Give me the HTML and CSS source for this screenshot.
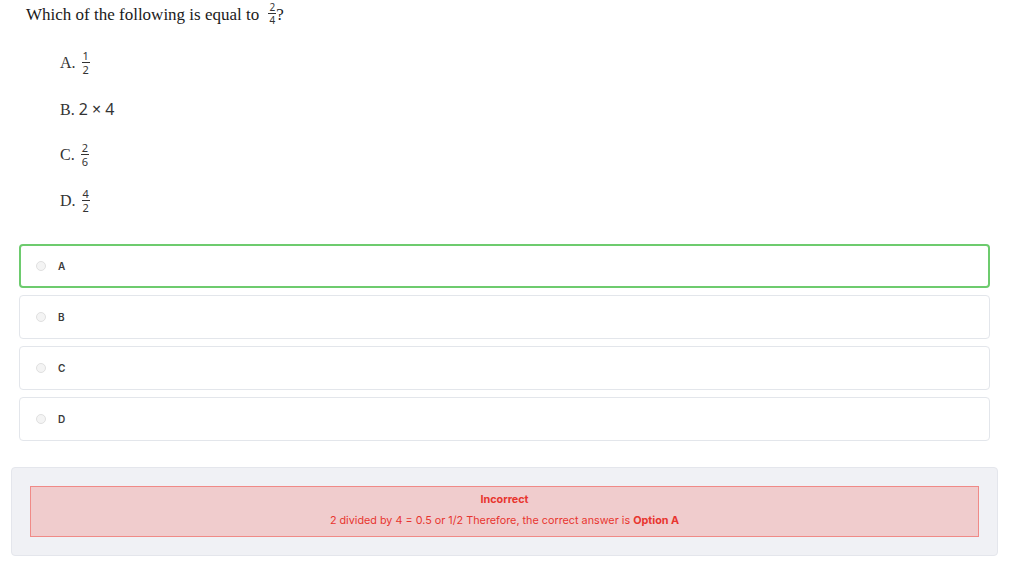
FILE: index.html
```html
<!DOCTYPE html>
<html>
<head>
<meta charset="utf-8">
<link rel="stylesheet" href="styles.css">
</head>
<body>
<div class="page">
  <div class="question">Which of the following is equal to <span class="frac q"><span class="num">2</span><span class="den">4</span></span>?</div>
  <div class="choices">
    <div class="choice">A. <span class="frac"><span class="num">1</span><span class="den">2</span></span></div>
    <div class="choice">B. <span class="sans">2 × 4</span></div>
    <div class="choice">C. <span class="frac"><span class="num">2</span><span class="den">6</span></span></div>
    <div class="choice">D. <span class="frac"><span class="num">4</span><span class="den">2</span></span></div>
  </div>
  <div class="answers">
    <label class="answer selected"><span class="radio"></span><span class="label">A</span></label>
    <label class="answer"><span class="radio"></span><span class="label">B</span></label>
    <label class="answer"><span class="radio"></span><span class="label">C</span></label>
    <label class="answer"><span class="radio"></span><span class="label">D</span></label>
  </div>
  <div class="feedback">
    <div class="result">
      <div class="title">Incorrect</div>
      <div class="explain">2 divided by 4 = 0.5 or 1/2 Therefore, the correct answer is <b>Option A</b></div>
    </div>
  </div>
</div>
</body>
</html>
```
FILE: styles.css
```css
html, body { margin: 0; padding: 0; background: #fff; }
.page { width: 1024px; height: 564px; position: relative; overflow: hidden; }
.question {
  font-family: "Liberation Serif", serif;
  font-size: 17px;
  color: #1a1a1a;
  padding: 4px 0 0 26px;
  height: 28px;
  line-height: 22px;
}
.frac {
  display: inline-flex;
  flex-direction: column;
  align-items: center;
  vertical-align: middle;
  font-family: "Noto Sans", sans-serif;
  font-size: 11px;
  line-height: 10px;
  color: #333;
  margin-left: 2px;
  position: relative;
  top: -1px;
}
.frac .num { border-bottom: 1px solid #333; padding: 0 1px 1px; }
.frac .den { padding-top: 2px; }
.frac.q { margin-left: 5px; top: -2px; font-size: 10px; line-height: 9px; }
.choices { padding: 9px 0 0 60px; }
.choice {
  font-family: "Liberation Serif", serif;
  font-size: 16px;
  color: #333;
  height: 46px;
  line-height: 44px;
}
.sans { font-family: "Noto Sans", sans-serif; font-size: 16px; }
.answers {
  margin: 19px 0 0 19px;
  width: 971px;
  display: flex;
  flex-direction: column;
  gap: 7px;
}
.answer {
  box-sizing: border-box;
  height: 44px;
  border: 1px solid #e3e6eb;
  border-radius: 4px;
  display: flex;
  align-items: center;
  padding-left: 16px;
  font-family: "Inter", sans-serif;
  font-size: 10px;
  font-weight: 600;
  color: #3a3a3a;
}
.answer.selected { border: 2px solid #6dcb6e; padding-left: 15px; }
.radio {
  width: 8px;
  height: 8px;
  border: 1px solid #e0e0e0;
  background: #f4f4f4;
  border-radius: 50%;
  margin-right: 12px;
}
.feedback {
  margin: 26px 0 0 11px;
  width: 987px;
  box-sizing: border-box;
  height: 89px;
  background: #f0f1f5;
  border: 1px solid #e4e6ec;
  border-radius: 4px;
  padding: 18px 18px;
}
.result {
  box-sizing: border-box;
  height: 51px;
  background: #f0cccd;
  border: 1px solid #f08a87;
  text-align: center;
  font-family: "Inter", sans-serif;
  color: #e8352f;
  font-size: 10.8px;
  padding-top: 6px;
}
.title { font-weight: 700; line-height: 14px; }
.explain { margin-top: 7px; line-height: 14px; }
.explain b { font-weight: 700; }
```
